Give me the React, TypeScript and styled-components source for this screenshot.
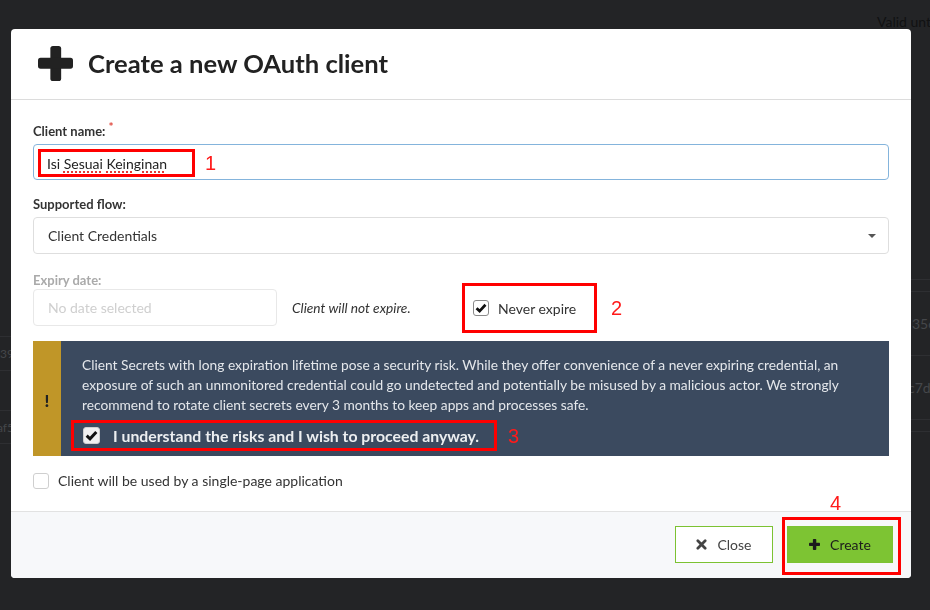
import React from "react";
import styled, { createGlobalStyle } from "styled-components";

const GlobalStyle = createGlobalStyle`
  * { box-sizing: border-box; }
  html, body { margin: 0; padding: 0; }
  body {
    width: 930px;
    height: 610px;
    overflow: hidden;
    background: #232426;
    font-family: Lato, "Noto Sans", sans-serif;
    color: #333;
  }
`;

/* ---------- page behind the dialog ---------- */

const Page = styled.div`
  height: 610px;
  display: flex;
  flex-direction: column;
`;

const TopBar = styled.div`
  height: 29px;
  padding: 14px 0 0 877px;
  font-size: 14px;
  line-height: 16px;
  color: #101112;
  white-space: nowrap;
  overflow: hidden;
`;

const Columns = styled.div`
  flex: 1;
  display: flex;
  justify-content: space-between;
`;

const SideColumn = styled.div<{ $width: number }>`
  width: ${({ $width }) => $width}px;
  overflow: hidden;
  display: flex;
  flex-direction: column;
`;

const Row = styled.div<{ $h: number; $line?: boolean; $size?: number }>`
  height: ${({ $h }) => $h}px;
  flex-shrink: 0;
  border-bottom: ${({ $line }) => ($line ? "1px solid #2e2f32" : "none")};
  display: flex;
  align-items: center;
  font-size: ${({ $size }) => $size ?? 14}px;
  color: #45474a;
  white-space: nowrap;
`;

const CellText = styled.span<{ $shift: number }>`
  margin-left: ${({ $shift }) => $shift}px;
`;

/* ---------- dialog ---------- */

const Overlay = styled.div`
  position: fixed;
  inset: 0;
  padding: 29px 0 0 11px;
`;

const Modal = styled.div`
  width: 900px;
  height: 549px;
  background: #fff;
  border-radius: 4px;
  display: flex;
  flex-direction: column;
  overflow: hidden;
`;

const Header = styled.div`
  height: 71px;
  flex-shrink: 0;
  border-bottom: 1px solid #dcdcdc;
  display: flex;
  align-items: center;
  gap: 15px;
  padding: 0 0 2px 27px;
`;

const Title = styled.h1`
  margin: 0;
  font-size: 25.6px;
  font-weight: 700;
  color: #222;
`;

const Body = styled.div`
  flex: 1;
  padding: 18px 22px 0;
`;

const Label = styled.div<{ $muted?: boolean; $gap: number; $top?: number }>`
  font-size: 13px;
  font-weight: 700;
  line-height: 18px;
  margin-top: ${({ $top }) => $top ?? 0}px;
  margin-bottom: ${({ $gap }) => $gap}px;
  color: ${({ $muted }) => ($muted ? "#aaaaaa" : "#333")};
`;

const Required = styled.sup`
  color: #e0463c;
  font-size: 12px;
  margin-left: 3px;
`;

const NameField = styled.div`
  height: 36px;
  border: 1px solid #84b4dc;
  border-radius: 4px;
  padding: 4px 0 0 4px;
  display: flex;
  align-items: flex-start;
  gap: 10px;
  font-size: 14px;
  color: #222;
`;

const Mark = styled.div<{ $w: number; $h: number; $pad: string }>`
  position: relative;
  width: ${({ $w }) => $w}px;
  height: ${({ $h }) => $h}px;
  flex-shrink: 0;
  border: 3px solid #ff0000;
  padding: ${({ $pad }) => $pad};
  display: flex;
  align-items: center;
`;

const MarkNumber = styled.span`
  font-family: "Liberation Sans", Arial, sans-serif;
  font-size: 20px;
  line-height: 28px;
  color: #ff1a1a;
`;

const NumberAbove = styled(MarkNumber)`
  position: absolute;
  bottom: 100%;
  left: 45px;
  margin-bottom: 3px;
`;

const Misspelled = styled.span`
  text-decoration: underline dotted #e53935;
  text-decoration-thickness: 1.5px;
  text-underline-offset: 3px;
`;

const Select = styled.div`
  height: 37px;
  border: 1px solid #dedede;
  border-radius: 4px;
  display: flex;
  align-items: center;
  justify-content: space-between;
  padding: 0 12px 0 14px;
  font-size: 14px;
  color: #333;
`;

const Caret = styled.span`
  width: 0;
  height: 0;
  border-left: 4px solid transparent;
  border-right: 4px solid transparent;
  border-top: 4px solid #555;
`;

const DateRow = styled.div`
  display: flex;
  align-items: center;
`;

const DateInput = styled.div`
  width: 244px;
  height: 37px;
  border: 1px solid #e8e8e8;
  border-radius: 4px;
  padding-left: 14px;
  display: flex;
  align-items: center;
  font-size: 14px;
  color: #cfcfcf;
`;

const Hint = styled.span`
  width: 170px;
  margin-left: 15px;
  font-size: 13.7px;
  font-style: italic;
  color: #333;
`;

const CheckRow = styled.label<{ $gap: number }>`
  display: flex;
  align-items: center;
  gap: ${({ $gap }) => $gap}px;
`;

const Box = styled.span<{ $size: number; $bg: string; $border: string }>`
  width: ${({ $size }) => $size}px;
  height: ${({ $size }) => $size}px;
  flex-shrink: 0;
  border: 1px solid ${({ $border }) => $border};
  border-radius: 3px;
  background: ${({ $bg }) => $bg};
  display: flex;
  align-items: center;
  justify-content: center;
`;

const CheckText = styled.span<{ $bold?: boolean; $light?: boolean }>`
  font-size: ${({ $bold }) => ($bold ? 15.8 : 14)}px;
  font-weight: ${({ $bold }) => ($bold ? 700 : 400)};
  color: ${({ $light }) => ($light ? "#eceef0" : "#333")};
`;

const Annotated = styled.div<{ $gap: number; $top?: number; $bottom?: number; $left?: number }>`
  display: flex;
  align-items: center;
  gap: ${({ $gap }) => $gap}px;
  margin: ${({ $top }) => $top ?? 0}px 0 ${({ $bottom }) => $bottom ?? 0}px
    ${({ $left }) => $left ?? 0}px;
`;

const Warning = styled.div`
  margin-top: 15px;
  display: flex;
  background: #3b4a5f;
`;

const WarnStrip = styled.div`
  width: 28px;
  flex-shrink: 0;
  background: #c09628;
  display: flex;
  align-items: center;
  justify-content: center;
  padding-top: 4px;
  font-size: 17px;
  font-weight: 900;
  color: #222;
`;

const WarnBody = styled.div`
  flex: 1;
  padding: 14px 30px 5px 21px;
  font-size: 13.75px;
  line-height: 20px;
  color: #e4e7eb;
`;

const SpaRow = styled.div`
  margin-top: 16px;
`;

const Footer = styled.div`
  height: 67px;
  flex-shrink: 0;
  border-top: 1px solid #e2e2e2;
  background: #f7f8fa;
  display: flex;
  justify-content: flex-end;
  align-items: flex-start;
  gap: 9px;
  padding: 5px 10px 0 0;
`;

const Button = styled.button<{ $primary?: boolean; $w: number }>`
  width: ${({ $w }) => $w}px;
  height: 37px;
  margin-top: ${({ $primary }) => ($primary ? 0 : 9)}px;
  border: 1px solid #7cc232;
  border-radius: 0;
  background: ${({ $primary }) => ($primary ? "#7dc433" : "#fff")};
  color: ${({ $primary }) => ($primary ? "#1c1c1c" : "#444")};
  font-family: Lato, "Noto Sans", sans-serif;
  font-size: 14px;
  display: flex;
  align-items: center;
  justify-content: center;
  gap: 10px;
  padding: 0;
`;

/* ---------- icons ---------- */

const PlusIcon = ({ size, color }: { size: number; color: string }) => (
  <svg width={size} height={size} viewBox="0 0 34 34">
    <rect x="12" y="0" width="10.5" height="34" rx="2.5" fill={color} />
    <rect x="0" y="11.5" width="34" height="10.5" rx="2.5" fill={color} />
  </svg>
);

const TimesIcon = () => (
  <svg width="11" height="11" viewBox="0 0 12 12">
    <path d="M2 2 L10 10 M10 2 L2 10" stroke="#444" strokeWidth="3" strokeLinecap="round" />
  </svg>
);

const CheckMark = ({ size }: { size: number }) => (
  <svg width={size} height={size} viewBox="0 0 14 14">
    <path d="M1.8 7.2 L5.4 10.6 L12.2 3.2" fill="none" stroke="#111" strokeWidth="3.2" />
  </svg>
);

const Checkbox = ({
  checked,
  size = 16,
  bg = "#fff",
  border = "#8a8a8a",
}: {
  checked?: boolean;
  size?: number;
  bg?: string;
  border?: string;
}) => (
  <Box $size={size} $bg={bg} $border={border}>
    {checked && <CheckMark size={size - 4} />}
  </Box>
);

const BackgroundPage = () => (
  <Page>
    <TopBar>Valid until</TopBar>
    <Columns>
      <SideColumn $width={11}>
        <Row $h={308} $line />
        <Row $h={34} $line $size={12}>
          <CellText $shift={0}>39ab71</CellText>
        </Row>
        <Row $h={40} $line />
        <Row $h={33} $line $size={12}>
          <CellText $shift={-3}>af5e02</CellText>
        </Row>
      </SideColumn>
      <SideColumn $width={19}>
        <Row $h={251} $line />
        <Row $h={12} $line />
        <Row $h={64} $line>
          <CellText $shift={1}>35c9</CellText>
        </Row>
        <Row $h={64} $line>
          <CellText $shift={-3}>c7d4</CellText>
        </Row>
        <Row $h={12} $line />
      </SideColumn>
    </Columns>
  </Page>
);

const App = () => (
  <>
    <GlobalStyle />
    <BackgroundPage />
    <Overlay>
      <Modal>
        <Header>
          <PlusIcon size={35} color="#222" />
          <Title>Create a new OAuth client</Title>
        </Header>
        <Body>
          <Label $gap={4}>
            Client name:<Required>*</Required>
          </Label>
          <NameField>
            <Mark $w={157} $h={28} $pad="0 0 0 6px">
              <span>
                Isi <Misspelled>Sesuai</Misspelled> <Misspelled>Keinginan</Misspelled>
              </span>
            </Mark>
            <MarkNumber>1</MarkNumber>
          </NameField>

          <Label $gap={4} $top={15}>
            Supported flow:
          </Label>
          <Select>
            Client Credentials
            <Caret />
          </Select>

          <Label $muted $gap={0} $top={17}>
            Expiry date:
          </Label>
          <DateRow>
            <DateInput>No date selected</DateInput>
            <Hint>Client will not expire.</Hint>
            <Annotated $gap={14} $top={-6} $bottom={-7}>
              <Mark $w={135} $h={50} $pad="0 0 0 8px">
                <CheckRow $gap={9}>
                  <Checkbox checked />
                  <CheckText>Never expire</CheckText>
                </CheckRow>
              </Mark>
              <MarkNumber>2</MarkNumber>
            </Annotated>
          </DateRow>

          <Warning>
            <WarnStrip>!</WarnStrip>
            <WarnBody>
              Client Secrets with long expiration lifetime pose a security risk. While they offer
              convenience of a never expiring credential, an exposure of such an unmonitored
              credential could go undetected and potentially be misused by a malicious actor. We
              strongly recommend to rotate client secrets every 3 months to keep apps and processes
              safe.
              <Annotated $gap={11} $top={5} $left={-11}>
                <Mark $w={426} $h={31} $pad="0 0 0 9px">
                  <CheckRow $gap={13}>
                    <Checkbox checked size={17} bg="#f0f0f0" border="#d0d0d0" />
                    <CheckText $bold $light>
                      I understand the risks and I wish to proceed anyway.
                    </CheckText>
                  </CheckRow>
                </Mark>
                <MarkNumber>3</MarkNumber>
              </Annotated>
            </WarnBody>
          </Warning>

          <SpaRow>
            <CheckRow $gap={9}>
              <Checkbox border="#cfcfcf" />
              <CheckText>Client will be used by a single-page application</CheckText>
            </CheckRow>
          </SpaRow>
        </Body>
        <Footer>
          <Button $w={98}>
            <TimesIcon />
            Close
          </Button>
          <Mark $w={119} $h={58} $pad="6px 5px 9px 2px">
            <NumberAbove>4</NumberAbove>
            <Button $primary $w={106}>
              <PlusIcon size={11} color="#1c1c1c" />
              Create
            </Button>
          </Mark>
        </Footer>
      </Modal>
    </Overlay>
  </>
);

export default App;
